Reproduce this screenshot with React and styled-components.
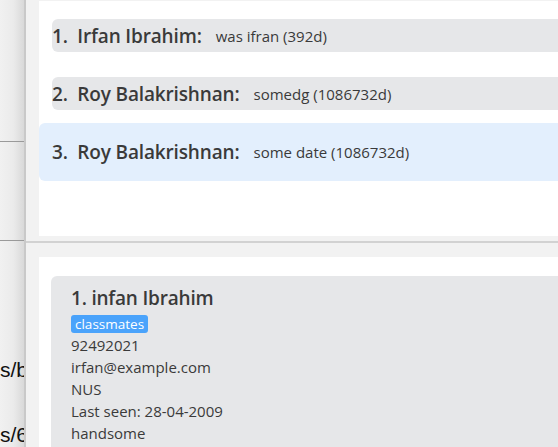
import React from "react";
import styled, { createGlobalStyle } from "styled-components";

const Global = createGlobalStyle`
  html, body { margin: 0; padding: 0; }
  body { width: 558px; height: 447px; overflow: hidden; background: #f2f2f2; }
`;

const Page = styled.div`
  display: flex;
  width: 558px;
  height: 447px;
  overflow: hidden;
  font-family: "Open Sans", "Noto Sans", sans-serif;
`;

const Sidebar = styled.div`
  width: 24px;
  flex: none;
  display: flex;
  flex-direction: column;
  overflow: hidden;
  background: linear-gradient(to right, #f1f1f1 0%, #ebebeb 55%, #d9d9d9 100%);
  border-right: 2px solid #c9c9c9;
`;

const SideRow = styled.div`
  height: ${(p) => p.$h}px;
  flex: none;
  border-bottom: ${(p) => (p.$line ? "1px solid #9a9a9a" : "none")};
  box-sizing: border-box;
  display: flex;
  align-items: flex-end;
  overflow: hidden;
  white-space: nowrap;
  font-family: "Liberation Sans", Arial, sans-serif;
  font-size: 21px;
  color: #111;
  padding-bottom: ${(p) => p.$pb || 0}px;
`;

const Main = styled.div`
  flex: 1;
  display: flex;
  flex-direction: column;
  background: #f2f2f2;
  min-width: 0;
`;

const TopPanel = styled.div`
  margin: 1px 0 0 13px;
  height: 235px;
  background: #fff;
  padding-top: 6px;
  box-sizing: border-box;
  flex: none;
`;

const Cell = styled.div`
  height: 58px;
  box-sizing: border-box;
  padding: 12px 0 13px 13px;
  background: ${(p) => (p.$selected ? "#e3effd" : "transparent")};
  border-radius: ${(p) => (p.$selected ? "6px 0 0 6px" : "0")};
`;

const Card = styled.div`
  height: 33px;
  display: flex;
  align-items: center;
  gap: 14px;
  background: ${(p) => (p.$selected ? "transparent" : "#e6e7e9")};
  border-radius: 6px 0 0 6px;
  white-space: pre;
`;

const Name = styled.span`
  font-size: 19px;
  font-weight: 600;
  color: #3a3a3a;
  letter-spacing: -0.15px;
`;

const Note = styled.span`
  font-size: 15px;
  color: #3a3a3a;
`;

const Divider = styled.div`
  height: 2px;
  margin-top: 5px;
  background: #d2d2d2;
  flex: none;
`;

const BottomPanel = styled.div`
  margin: 14px 0 0 13px;
  flex: 1;
  background: #fff;
  padding: 19px 0 0 12px;
  box-sizing: border-box;
`;

const PersonCard = styled.div`
  background: #e6e7e9;
  border-radius: 6px 0 0 0;
  padding: 9px 0 20px 20px;
  min-height: 200px;
  color: #3a3a3a;
`;

const Title = styled.div`
  font-size: 19px;
  font-weight: 600;
  line-height: 26px;
  letter-spacing: -0.2px;
  margin-bottom: 1px;
`;

const Tag = styled.span`
  display: inline-block;
  background: #4aa3fb;
  color: #fff;
  font-size: 13.5px;
  line-height: 18px;
  padding: 0 4px;
  border-radius: 3px;
`;

const Line = styled.div`
  font-size: 15px;
  line-height: 22px;
`;

const people = [
  { n: "1.  Irfan Ibrahim:", note: "was ifran (392d)" },
  { n: "2.  Roy Balakrishnan:", note: "somedg (1086732d)" },
  { n: "3.  Roy Balakrishnan:", note: "some date (1086732d)", sel: true },
];

export default function App() {
  return (
    <>
      <Global />
      <Page>
        <Sidebar>
          <SideRow $h={142} $line />
          <SideRow $h={99} $line />
          <SideRow $h={142} $pb={1}>s/b</SideRow>
          <SideRow $h={64}>s/6</SideRow>
        </Sidebar>
        <Main>
          <TopPanel>
            {people.map((p) => (
              <Cell key={p.n} $selected={p.sel}>
                <Card $selected={p.sel}>
                  <Name>{p.n}</Name>
                  <Note>{p.note}</Note>
                </Card>
              </Cell>
            ))}
          </TopPanel>
          <Divider />
          <BottomPanel>
            <PersonCard>
              <Title>1. infan Ibrahim</Title>
              <Tag>classmates</Tag>
              <Line>92492021</Line>
              <Line>irfan@example.com</Line>
              <Line>NUS</Line>
              <Line>Last seen: 28-04-2009</Line>
              <Line>handsome</Line>
            </PersonCard>
          </BottomPanel>
        </Main>
      </Page>
    </>
  );
}
